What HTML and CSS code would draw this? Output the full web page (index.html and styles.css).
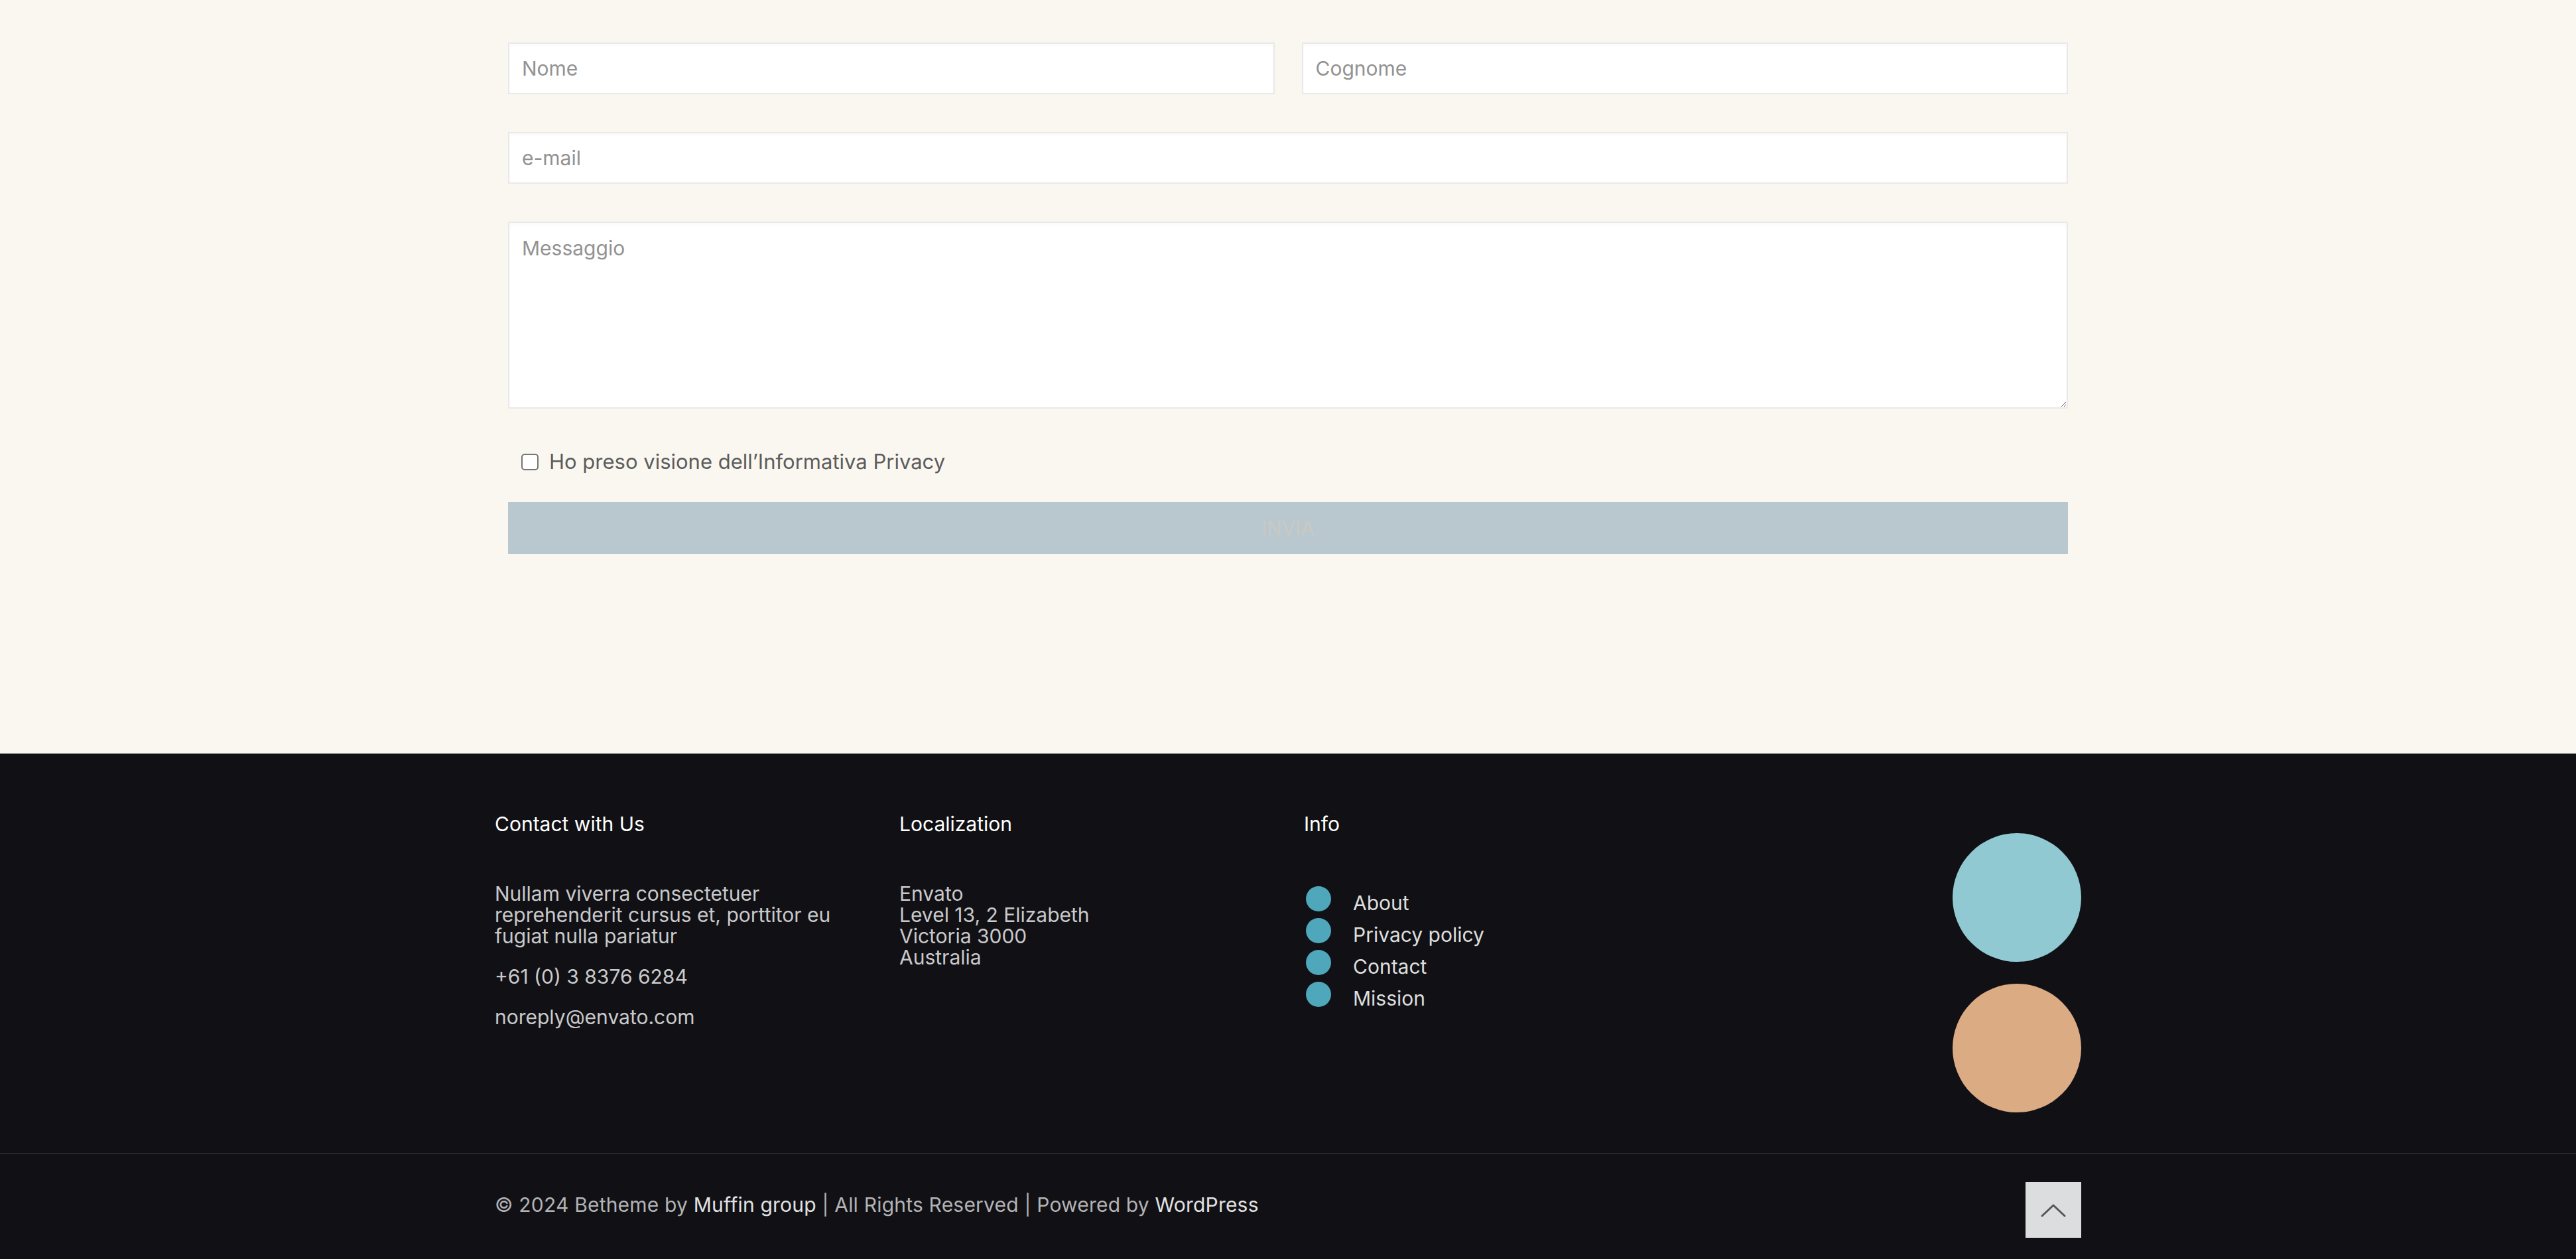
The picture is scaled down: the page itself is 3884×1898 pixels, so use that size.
FILE: index.html
```html
<!DOCTYPE html>
<html lang="it">
<head>
<meta charset="utf-8">
<title>Contatti</title>
<link rel="stylesheet" href="styles.css">
</head>
<body>
<section class="contact">
  <form class="form">
    <div class="row two">
      <input class="field" type="text" placeholder="Nome">
      <input class="field" type="text" placeholder="Cognome">
    </div>
    <div class="row">
      <input class="field" type="email" placeholder="e-mail">
    </div>
    <div class="row">
      <textarea class="field area" placeholder="Messaggio"></textarea>
    </div>
    <label class="consent">
      <input class="check" type="checkbox">
      <span>Ho preso visione dell’Informativa Privacy</span>
    </label>
    <button class="submit" type="button">Invia</button>
  </form>
</section>

<footer class="footer">
  <div class="widgets">
    <div class="col">
      <h4 class="heading">Contact with Us</h4>
      <p class="text">Nullam viverra consectetuer reprehenderit cursus et, porttitor eu fugiat nulla pariatur</p>
      <p class="text gap">+61 (0) 3 8376 6284</p>
      <p class="text gap">noreply@envato.com</p>
    </div>
    <div class="col">
      <h4 class="heading">Localization</h4>
      <p class="text">Envato<br>Level 13, 2 Elizabeth<br>Victoria 3000<br>Australia</p>
    </div>
    <div class="col">
      <h4 class="heading">Info</h4>
      <ul class="links">
        <li><span class="dot"></span><a href="#">About</a></li>
        <li><span class="dot"></span><a href="#">Privacy policy</a></li>
        <li><span class="dot"></span><a href="#">Contact</a></li>
        <li><span class="dot"></span><a href="#">Mission</a></li>
      </ul>
    </div>
    <div class="col badges">
      <span class="circle blue"></span>
      <span class="circle peach"></span>
    </div>
  </div>
  <div class="bottom">
    <div class="bottom-inner">
      <p class="copy">© 2024 Betheme by <a href="#">Muffin group</a> | All Rights Reserved | Powered by <a href="#">WordPress</a></p>
      <a class="totop" href="#" aria-label="Torna su">
        <svg width="84" height="84" viewBox="0 0 84 84"><polyline points="25,51 42,35 59,51" fill="none" stroke="#555558" stroke-width="3" stroke-linecap="round" stroke-linejoin="round"/></svg>
      </a>
    </div>
  </div>
</footer>
</body>
</html>
```
FILE: styles.css
```css
* { box-sizing: border-box; }

html, body {
  margin: 0;
  padding: 0;
}

body {
  font-family: Inter, "Liberation Sans", Arial, sans-serif;
  font-size: 30px;
  line-height: 36px;
  background: #111115;
}

.contact {
  background: #faf7f0;
  height: 1136px;
  padding-top: 64px;
}

.form {
  width: 2352px;
  margin: 0 auto;
}

.row {
  margin-bottom: 57px;
}

.row.two {
  display: grid;
  grid-template-columns: 1fr 1fr;
  column-gap: 41px;
}

.field {
  display: block;
  width: 100%;
  height: 78px;
  padding: 0 19px;
  border: 2px solid #e9e9ea;
  background: #ffffff;
  box-shadow: inset 0 3px 5px rgba(0, 0, 0, 0.025);
  font-family: Inter, "Liberation Sans", Arial, sans-serif;
  font-size: 30px;
  color: #444;
  outline: none;
}

.field::placeholder {
  color: #929292;
}

.area {
  height: 282px;
  padding-top: 20px;
  resize: vertical;
  line-height: 36px;
}

.consent {
  display: flex;
  align-items: center;
  gap: 16px;
  margin-top: 62px;
  padding-left: 20px;
  height: 36px;
  font-size: 31px;
  color: #5c5c5c;
}

.check {
  appearance: none;
  -webkit-appearance: none;
  margin: 0;
  width: 26px;
  height: 25px;
  border: 2px solid #767676;
  border-radius: 5px;
  background: #fff;
  flex: none;
}

.submit {
  display: block;
  width: 100%;
  height: 78px;
  margin-top: 43px;
  border: 0;
  background: #b9c8cf;
  color: #cbc8c2;
  font-family: Inter, "Liberation Sans", Arial, sans-serif;
  font-size: 30px;
  text-transform: uppercase;
}

/* Footer */
.footer {
  background: #111115;
  color: #c9c9cb;
}

.widgets {
  width: 2392px;
  margin: 0 auto;
  padding-top: 88px;
  height: 602px;
  display: grid;
  grid-template-columns: 610px 610px 1fr 194px;
}

.heading {
  margin: 0 0 71px;
  font-weight: 400;
  font-size: 30px;
  line-height: 36px;
  color: #ffffff;
}

.text {
  margin: 0;
  max-width: 560px;
  line-height: 32px;
}

.text.gap {
  margin-top: 29px;
}

.links {
  list-style: none;
  margin: 0;
  padding: 0;
}

.links li {
  display: flex;
  align-items: flex-start;
  height: 48px;
}

.dot {
  width: 38px;
  height: 38px;
  margin: 5px 0 0 3px;
  border-radius: 50%;
  background: #4ea7ba;
  flex: none;
}

.links a {
  margin: 14px 0 0 33px;
  line-height: 32px;
  color: #dedede;
  text-decoration: none;
}

.badges {
  display: flex;
  flex-direction: column;
  gap: 33px;
  padding-top: 32px;
}

.circle {
  display: block;
  width: 194px;
  height: 194px;
  border-radius: 50%;
}

.circle.blue { background: #90c9d2; }
.circle.peach { background: #dbab84; }

.bottom {
  border-top: 2px solid #29292d;
  height: 160px;
}

.bottom-inner {
  width: 2392px;
  margin: 0 auto;
  display: flex;
  justify-content: space-between;
  align-items: flex-start;
}

.copy {
  margin: 58px 0 0;
  letter-spacing: 0.2px;
  color: #b3b3b5;
}

.copy a {
  color: #e2e2e2;
  text-decoration: none;
}

.totop {
  display: block;
  width: 84px;
  height: 84px;
  margin-top: 42px;
  background: #dcdddf;
}

.totop svg {
  display: block;
}
```
